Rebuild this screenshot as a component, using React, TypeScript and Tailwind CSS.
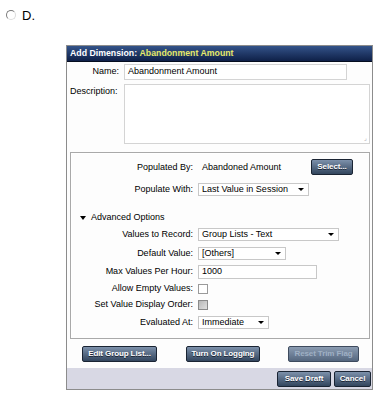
import React from "react";

const font = { fontFamily: '"Liberation Sans", Arial, sans-serif' };

function Btn({ children, w, disabled }: { children: React.ReactNode; w: string; disabled?: boolean }) {
  return (
    <div
      className={`${w} h-[16px] flex items-center justify-center rounded-[2px] border text-[8px] font-bold tracking-[-0.1px] ${
        disabled
          ? "border-[#3e4b5e] bg-gradient-to-b from-[#8b9cb2] to-[#55677f] text-[#9fb0c4]"
          : "border-[#1a2433] bg-gradient-to-b from-[#7d91ab] to-[#33465e] text-white [text-shadow:0_1px_0_#1a2433]"
      }`}
    >
      {children}
    </div>
  );
}

function Select({ w, children }: { w: string; children: React.ReactNode }) {
  return (
    <div className={`${w} h-[13px] border border-[#c8c8c8] bg-white flex items-center pl-[3px] pr-[4px] justify-between`}>
      <span>{children}</span>
      <span className="w-0 h-0 border-l-[3px] border-r-[3px] border-t-[3px] border-l-transparent border-r-transparent border-t-black" />
    </div>
  );
}

function Row({ label, children, mt, h }: { label: string; children: React.ReactNode; mt: string; h: string }) {
  return (
    <div className={`flex items-center ${mt} ${h}`}>
      <div className="w-[122px] text-right pr-[0px]">{label}</div>
      <div className="ml-[5px] flex items-center">{children}</div>
    </div>
  );
}

export default function App() {
  return (
    <div className="w-[385px] h-[400px] bg-white text-black overflow-hidden" style={font}>
      <div className="flex items-center pt-[6px] pl-[6px] h-[18px] box-content">
        <div className="w-[10px] h-[10px] rounded-full border border-t-[#7a7a7a] border-l-[#7a7a7a] border-r-[#dcdcdc] border-b-[#dcdcdc] bg-white" />
        <span className="ml-[6px] text-[13px] leading-none">D.</span>
      </div>

      <div className="ml-[66px] mt-[21px] w-[307px] h-[345px] border border-[#8c8c8c] bg-[#fdfdfd] text-[9px] flex flex-col">
        <div className="h-[16px] flex items-center px-[3px] bg-gradient-to-b from-[#34548a] to-[#0f2048] border-b border-[#050d20] font-bold text-[8.75px] whitespace-nowrap">
          <span className="text-white">Add Dimension:&nbsp;</span>
          <span className="text-[#e4e86a]">Abandonment Amount</span>
        </div>

        <div className="flex items-center mt-[2px] h-[16px]">
          <div className="w-[52px] text-right">Name:</div>
          <div className="ml-[5px] w-[223px] h-[16px] border border-[#d4d4d4] bg-white flex items-center pl-[3px]">
            Abandonment Amount
          </div>
        </div>

        <div className="flex mt-[4px] h-[60px]">
          <div className="w-[52px] pl-[3px] pt-[1px]">Description:</div>
          <div className="ml-[5px] w-[246px] h-[60px] border border-[#d4d4d4] bg-white relative">
            <span className="absolute right-[2px] bottom-[2px] text-[6px] leading-none text-[#aaa]">⌟</span>
          </div>
        </div>

        <div className="ml-[3px] mt-[8px] w-[300px] h-[188px] border border-[#a9a9a9] shadow-[inset_1px_1px_0_#fff] bg-[#fdfdfd] flex flex-col">
          <div className="flex items-center mt-[7px] h-[15px]">
            <div className="w-[122px] text-right">Populated By:</div>
            <div className="ml-[9px] w-[109px]">Abandoned Amount</div>
            <Btn w="w-[42px]">Select...</Btn>
          </div>
          <Row label="Populate With:" mt="mt-[8px]" h="h-[13px]">
            <Select w="w-[111px]">Last Value in Session</Select>
          </Row>
          <div className="flex items-center mt-[16px] h-[12px] pl-[9px]">
            <span className="w-0 h-0 border-l-[3px] border-r-[3px] border-t-[4px] border-l-transparent border-r-transparent border-t-black" />
            <span className="ml-[5px]">Advanced Options</span>
          </div>
          <Row label="Values to Record:" mt="mt-[4px]" h="h-[13px]">
            <Select w="w-[141px]">Group Lists - Text</Select>
          </Row>
          <Row label="Default Value:" mt="mt-[6px]" h="h-[13px]">
            <Select w="w-[88px]">[Others]</Select>
          </Row>
          <Row label="Max Values Per Hour:" mt="mt-[5px]" h="h-[14px]">
            <div className="w-[119px] h-[14px] border border-[#c8c8c8] bg-white flex items-center pl-[3px]">1000</div>
          </Row>
          <Row label="Allow Empty Values:" mt="mt-[4px]" h="h-[12px]">
            <div className="w-[10px] h-[10px] border border-[#9a9a9a] bg-white" />
          </Row>
          <Row label="Set Value Display Order:" mt="mt-[4px]" h="h-[12px]">
            <div className="w-[10px] h-[10px] border border-[#8a8a8a] bg-gradient-to-br from-[#b8b8b8] to-[#e0e0e0]" />
          </Row>
          <Row label="Evaluated At:" mt="mt-[5px]" h="h-[13px]">
            <Select w="w-[71px]">Immediate</Select>
          </Row>
        </div>

        <div className="flex items-center mt-[7px] h-[16px] pl-[15px]">
          <Btn w="w-[75px]">Edit Group List...</Btn>
          <div className="ml-[29px]">
            <Btn w="w-[74px]">Turn On Logging</Btn>
          </div>
          <div className="ml-[28px]">
            <Btn w="w-[71px]" disabled>Reset Trim Flag</Btn>
          </div>
        </div>

        <div className="mt-[6px] h-[21px] bg-[#d8d8e4] flex items-center justify-end pr-[1px] gap-[3px]">
          <Btn w="w-[54px]">Save Draft</Btn>
          <Btn w="w-[37px]">Cancel</Btn>
        </div>
      </div>
    </div>
  );
}
